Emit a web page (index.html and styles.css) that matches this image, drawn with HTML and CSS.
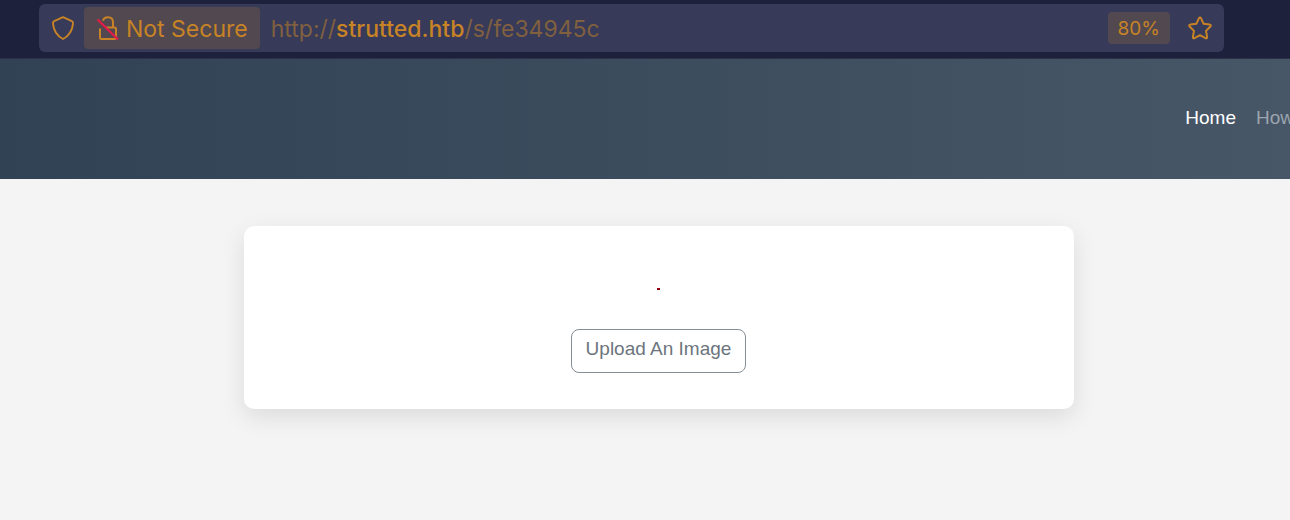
FILE: index.html
```html
<!DOCTYPE html>
<html lang="en">
<head>
    <meta charset="UTF-8">
    <meta name="viewport" content="width=device-width, initial-scale=1.0">
    <title>Strutted</title>
    <link rel="stylesheet" href="styles.css">
</head>
<body>
    <div class="toolbar">
        <div class="urlbar">
            <button class="icon-btn" type="button" aria-label="Tracking protection">
                <svg width="24" height="26" viewBox="0 0 24 26" fill="none" stroke="currentColor" stroke-width="1.9" stroke-linejoin="round">
                    <path d="M12 2.200 20.800 6.200C21.900 6.700 22.200 7.300 22 8.600C21.400 15.200 18 20.800 12 24C6 20.800 2.600 15.200 2 8.600C1.800 7.300 2.100 6.700 3.200 6.200Z"/>
                </svg>
            </button>
            <button class="security" type="button">
                <svg width="24" height="26" viewBox="0 0 24 26" fill="none" stroke="currentColor" stroke-width="2">
                    <path d="M7 5.800C7.400 3.800 9.200 2.200 12 2.200C15 2.200 17 4.200 17 7.200V12.500M4 13.500V22.500Q4 24 5.500 24H18.500Q20 24 20 22.500V14Q20 12.500 18.500 12.500H10"/>
                    <path d="M1.500 4.500 22 24.500" stroke="#e21c48" stroke-width="2.400"/>
                </svg>
                <span>Not Secure</span>
            </button>
            <div class="address">http://<span class="domain">strutted.htb</span>/s/fe34945c</div>
            <button class="zoom" type="button">80%</button>
            <button class="icon-btn" type="button" aria-label="Bookmark this page">
                <svg width="26" height="26" viewBox="0 0 26 26" fill="none" stroke="currentColor" stroke-width="2" stroke-linejoin="round">
                    <path d="M12 3.200Q13 1.600 14 3.200L16.600 8.800L22.800 9.600Q24.600 10.100 23.400 11.500L19 15.900L20.100 22Q20.200 23.800 18.500 23.200L13 20.200L7.500 23.200Q5.800 23.800 5.900 22L7 15.900L2.600 11.500Q1.400 10.100 3.200 9.600L9.400 8.800Z"/>
                </svg>
            </button>
        </div>
    </div>

    <div class="page">
        <header class="navbar">
            <nav class="nav-links">
                <a class="active" href="#">Home</a>
                <a href="#">How</a>
            </nav>
        </header>
        <main class="content">
            <div class="card">
                <div class="shared-image" role="img" aria-label="Shared image"></div>
                <a class="btn" href="#">Upload An Image</a>
            </div>
        </main>
    </div>
</body>
</html>
```
FILE: styles.css
```css
:root {
    --chrome: #1e213b;
    --field: #373a58;
    --accent: #c78326;
    --chip: #514850;
}

* { box-sizing: border-box; }

body {
    margin: 0;
    background: #f4f4f4;
    font-family: "Liberation Sans", Arial, sans-serif;
    font-size: 19px;
    line-height: 28px;
    overflow-x: hidden;
}

/* --- Browser toolbar --- */
.toolbar {
    background: var(--chrome);
    padding: 4px 66px 6px 39px;
    border-bottom: 1px solid #2d3049;
    font-family: Inter, sans-serif;
}

.urlbar {
    display: flex;
    align-items: center;
    height: 48px;
    padding: 0 11px 0 12px;
    background: var(--field);
    border-radius: 6px;
    color: var(--accent);
}

.urlbar button {
    display: flex;
    align-items: center;
    border: 0;
    background: none;
    color: inherit;
    font-family: inherit;
    cursor: pointer;
}

.urlbar .icon-btn { padding: 0; }

.urlbar .security {
    height: 42px;
    margin-left: 9px;
    padding: 0 12px;
    gap: 6px;
    background: var(--chip);
    border-radius: 4px;
    font-size: 23px;
}

.address {
    flex: 1;
    margin-left: 11px;
    padding-top: 2px;
    font-size: 23px;
    color: #80603f;
}
.domain { color: var(--accent); font-weight: 500; }

.urlbar .security span { padding-top: 2px; }

.urlbar .zoom {
    height: 32px;
    margin-right: 17px;
    padding: 0 10px;
    background: var(--chip);
    border-radius: 4px;
    font-size: 19px;
}

/* --- Page, a little wider than the window --- */
.page { width: calc(100% + 27px); }

.navbar {
    display: flex;
    justify-content: flex-end;
    align-items: center;
    height: 120px;
    padding: 0 23px 2px 0;
    background: linear-gradient(to right, #304254, #485768);
}

.nav-links { display: flex; gap: 20px; }
.nav-links a { color: #9ca4ad; text-decoration: none; }
.nav-links .active { color: #fff; }

.content { padding: 47px 24px; }

.card {
    display: flex;
    flex-direction: column;
    align-items: center;
    max-width: 830px;
    margin: 0 auto;
    padding: 62px 36px 36px;
    background: #fff;
    border-radius: 10px;
    box-shadow: 0 8px 24px rgba(0, 0, 0, 0.1);
}

.shared-image {
    width: 3px;
    height: 2px;
    margin-bottom: 39px;
    background: #900010;
}

.btn {
    padding: 5px 14px 9px;
    border: 1px solid #858d95;
    border-radius: 8px;
    color: #6c757d;
    text-decoration: none;
}
```
